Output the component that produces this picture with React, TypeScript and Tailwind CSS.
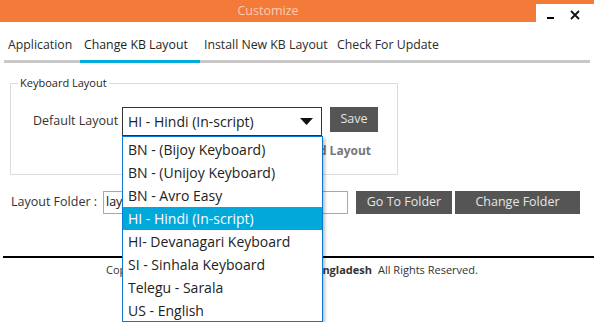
import { useState } from "react";

const tabs = [
    { label: "Application", width: "w-[76px]" },
    { label: "Change KB Layout", width: "w-[120px]" },
    { label: "Install New KB Layout", width: "w-[133px]" },
    { label: "Check For Update", width: "w-[114px]" },
];

const layouts = [
    "BN - (Bijoy Keyboard)",
    "BN - (Unijoy Keyboard)",
    "BN - Avro Easy",
    "HI - Hindi (In-script)",
    "HI- Devanagari Keyboard",
    "SI - Sinhala Keyboard",
    "Telegu - Sarala",
    "US - English",
];

export default function App() {
    const [activeTab] = useState(1);
    const [selected, setSelected] = useState("HI - Hindi (In-script)");

    return (
        <div className="w-[594px] h-[322px] bg-white overflow-hidden text-[#1e1e1e] font-['Open_Sans',sans-serif]">
            {/* Title bar */}
            <div className="flex h-[22px]">
                <div className="flex-1 bg-[#f47a39] flex items-center justify-center text-[12.5px] text-[#fbcdb3]">
                    Customize
                </div>
                <div className="w-[58px] flex flex-col">
                    <div className="h-[5px] bg-[#f47a39]" />
                    <div className="flex items-start h-[20px]">
                        <span className="mt-[13px] ml-[11px] w-[7px] h-[2px] bg-black" />
                        <svg className="mt-[6px] ml-[16px]" width="10" height="10" viewBox="0 0 10 10">
                            <path d="M1 1 L9 9 M9 1 L1 9" stroke="#111" strokeWidth="1.8" />
                        </svg>
                    </div>
                </div>
            </div>

            {/* Tabs */}
            <div className="mx-[4px] mt-[14px]">
                <div className="flex text-[12.3px] leading-[18px]">
                    {tabs.map((t, i) => (
                        <div
                            key={t.label}
                            className={`${t.width} shrink-0 pl-[4px] whitespace-nowrap ${i === activeTab ? "text-[#1e1e1e]" : "text-[#2b2b2b]"}`}
                        >
                            {t.label}
                        </div>
                    ))}
                </div>
                <div className="flex h-[3px] mt-[6px] bg-[#c8c8c8]">
                    <div className="w-[76px]" />
                    <div className="w-[120px] bg-[#00acdc]" />
                </div>
            </div>

            {/* Keyboard Layout group */}
            <div className="relative ml-[10px] mt-[20px] w-[388px] h-[92px] border border-[#dcdcdc]">
                <span className="absolute -top-[8px] left-[7px] bg-white px-[2px] text-[11px] leading-[14px]">
                    Keyboard Layout
                </span>
                <div className="flex items-start mt-[23px]">
                    <span className="ml-[22px] w-[89px] shrink-0 mt-[5px] whitespace-nowrap text-[12.5px] leading-[18px] text-[#333]">
                        Default Layout
                    </span>
                    <div className="relative shrink-0">
                        <div className="w-[200px] h-[29px] border border-[#333] flex items-center pl-[5px] pr-[8px] text-[14px] text-[#222]">
                            <span className="flex-1">{selected}</span>
                            <svg width="13" height="7" viewBox="0 0 13 7">
                                <path d="M0 0 H13 L6.5 7 Z" fill="#111" />
                            </svg>
                        </div>
                        {/* Open dropdown list */}
                        <ul className="absolute z-10 left-0 top-[29px] w-[201px] h-[186px] bg-white border border-[#0a78d4] pt-[1px] text-[14px] shadow-[2px_2px_3px_rgba(0,0,0,0.25)]">
                            {layouts.map((l) => (
                                <li
                                    key={l}
                                    onClick={() => setSelected(l)}
                                    className={`h-[23px] flex items-center pl-[5px] ${l === selected ? "bg-[#00a9d9] text-white" : "text-[#222]"}`}
                                >
                                    {l}
                                </li>
                            ))}
                        </ul>
                    </div>
                    <div className="ml-[8px] w-[48px] shrink-0 flex flex-col items-end">
                        <button className="w-[48px] h-[25px] bg-[#555555] text-[#e6e6e6] text-[12.5px]">Save</button>
                        <span className="mt-[10px] mr-[7px] text-[12px] font-bold text-[#777] whitespace-nowrap">
                            Reload Layout
                        </span>
                    </div>
                </div>
            </div>

            {/* Layout folder row */}
            <div className="flex items-center mt-[16px]">
                <span className="ml-[11px] w-[92px] shrink-0 whitespace-nowrap text-[12.5px] text-[#333]">Layout Folder :</span>
                <div className="w-[245px] h-[23px] shrink-0 border border-[#a9a9a9] flex items-center pl-[2px] text-[12.5px] text-[#111] overflow-hidden">
                    layouts
                </div>
                <button className="ml-[8px] w-[96px] h-[23px] bg-[#555555] text-[#e6e6e6] text-[12.5px]">Go To Folder</button>
                <button className="ml-[3px] w-[125px] h-[23px] bg-[#555555] text-[#e6e6e6] text-[12.5px]">Change Folder</button>
            </div>

            {/* Footer */}
            <div className="mt-[42px] ml-[3px] h-[2px] bg-black" />
            <div className="flex items-center mt-[4px] pl-[106px] text-[11px] leading-[16px] whitespace-nowrap">
                <div className="w-[266px] flex justify-between">
                    <span className="text-[#333]">Copyright ©</span>
                    <span className="font-bold text-[#333]">OmicronLab Bangladesh</span>
                </div>
                <span className="ml-[6px] text-[#333]">All Rights Reserved.</span>
            </div>
        </div>
    );
}
